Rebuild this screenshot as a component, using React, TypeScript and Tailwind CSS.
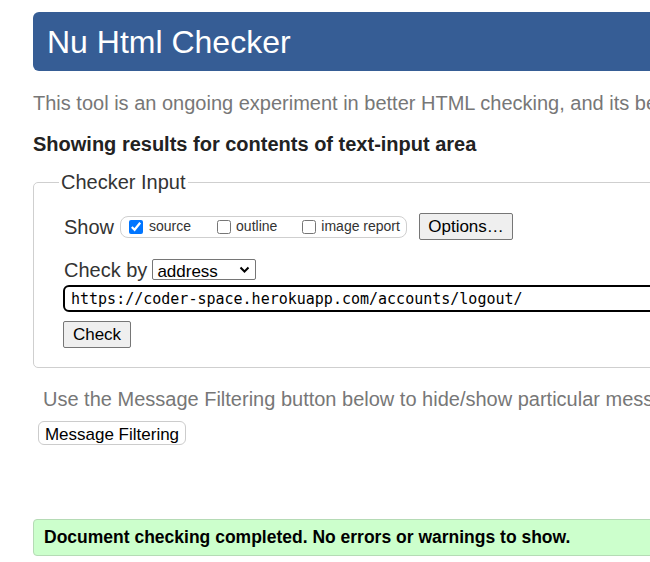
import { useState } from 'react';

const sans = { fontFamily: '"Liberation Sans", Arial, sans-serif' };

export default function App() {
  const [mode, setMode] = useState('address');

  return (
    <div className="w-full h-[562px] overflow-hidden bg-white font-['Liberation_Sans',Arial,sans-serif]">
      <div className="w-[1000px] pl-[33px] pt-[12px]">
        {/* Header */}
        <div className="h-[59px] rounded-[6px] bg-[#365d95] pl-[14px] flex items-center">
          <h1 className="text-[32px] leading-none text-white">Nu Html Checker</h1>
        </div>

        <p className="mt-[20px] text-[20px] leading-[24px] text-[#777] whitespace-nowrap">
          This tool is an ongoing experiment in better HTML checking, and its behavior remains subject to change
        </p>
        <p className="mt-[17px] text-[20px] leading-[24px] font-bold text-[#222]">
          Showing results for contents of text-input area
        </p>

        {/* Checker input */}
        <fieldset className="mt-[14px] w-[800px] border border-[#cfcfcf] rounded-[5px] pl-[25px] pb-[19px]">
          <legend className="px-[2px] text-[20px] leading-[24px] text-[#333]">Checker Input</legend>

          <div className="ml-[5px] mt-[19px] flex items-center h-[27px]">
            <span className="text-[20px] text-[#333]">Show</span>
            <div className="ml-[6px] h-[22px] w-[287px] border border-[#cfcfcf] rounded-[8px] flex items-center pl-[8px] text-[14px] text-[#333]">
              <label className="flex items-center mr-[26px]">
                <input type="checkbox" defaultChecked className="w-[14px] h-[14px]" />
                <span className="ml-[6px]">source</span>
              </label>
              <label className="flex items-center mr-[25px]">
                <input type="checkbox" className="w-[14px] h-[14px]" />
                <span className="ml-[5px]">outline</span>
              </label>
              <label className="flex items-center">
                <input type="checkbox" className="w-[14px] h-[14px]" />
                <span className="ml-[5px]">image report</span>
              </label>
            </div>
            <button className="ml-[12px] h-[27px] w-[94px] bg-[#efefef] border border-[#767676] rounded-[2px] text-[17px] text-black">
              Options…
            </button>
          </div>

          <div className="ml-[5px] mt-[19px] flex items-center h-[21px]">
            <span className="text-[20px] text-[#333]">Check by</span>
            <div className="relative ml-[5px] h-[21px] w-[104px] border border-[#767676] rounded-[2px] bg-white">
              <select
                value={mode}
                onChange={e => setMode(e.target.value)}
                className="appearance-none w-full h-full pl-[4px] pr-[20px] bg-transparent text-[17px] leading-[19px] text-black outline-none"
                style={sans}
              >
                <option value="address">address</option>
                <option value="file">file upload</option>
                <option value="text">text input</option>
              </select>
              <svg className="absolute right-[5px] top-[6px] pointer-events-none" width="11" height="8" viewBox="0 0 11 8">
                <path d="M1.5 1.5 L5.5 5.5 L9.5 1.5" fill="none" stroke="black" strokeWidth="2" />
              </svg>
            </div>
          </div>

          <input
            type="text"
            defaultValue="https://coder-space.herokuapp.com/accounts/logout/"
            className="mt-[5px] ml-[4px] block w-[760px] h-[27px] border-2 border-black rounded-[6px] pl-[6px] text-[15px] text-black outline-none font-['DejaVu_Sans_Mono',monospace]"
          />

          <button className="mt-[9px] ml-[4px] block h-[27px] w-[68px] bg-[#efefef] border border-[#767676] rounded-[2px] text-[17px] text-black">
            Check
          </button>
        </fieldset>

        <p className="mt-[19px] pl-[10px] text-[20px] leading-[24px] text-[#777] whitespace-nowrap">
          Use the Message Filtering button below to hide/show particular messages, and to see total counts of errors and warnings.
        </p>
        <button className="mt-[10px] ml-[5px] block h-[24px] w-[148px] bg-white border border-[#cccccc] rounded-[6px] text-[17px] text-black">
          Message Filtering
        </button>

        <div className="mt-[74px] h-[37px] w-[900px] bg-[#ccffcc] border border-[#b5dbb5] rounded-[4px] pl-[10px] flex items-center">
          <p className="text-[17.5px] font-bold text-black">Document checking completed. No errors or warnings to show.</p>
        </div>
      </div>
    </div>
  );
}
